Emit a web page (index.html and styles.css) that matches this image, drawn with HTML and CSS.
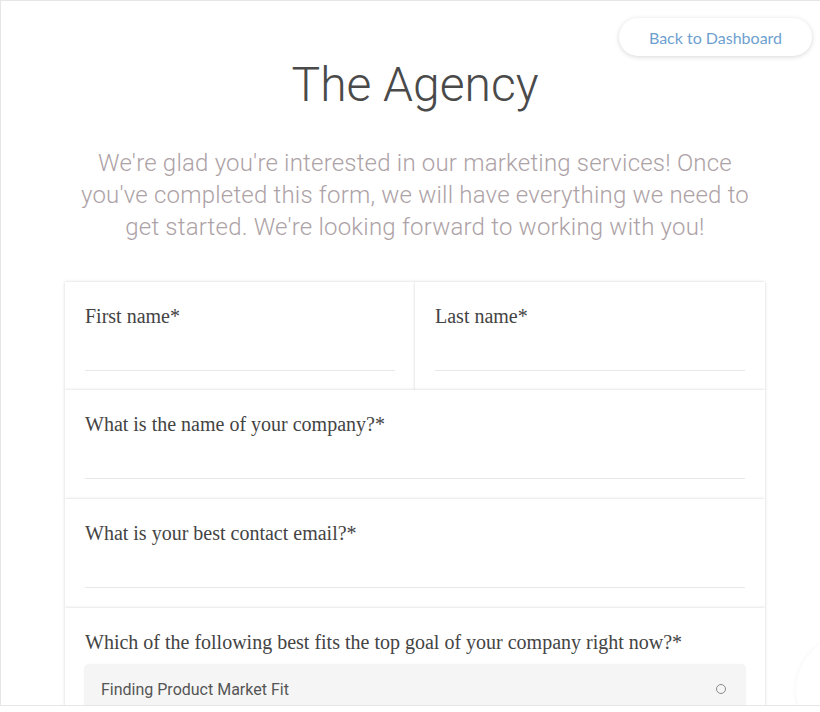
FILE: index.html
```html
<!DOCTYPE html>
<html lang="en">
<head>
<meta charset="utf-8">
<title>The Agency</title>
<link rel="stylesheet" href="styles.css">
</head>
<body>
<div class="frame">
  <div class="topbar">
    <a class="back-btn" href="#">Back to Dashboard</a>
  </div>
  <div class="content">
    <h1 class="title">The Agency</h1>
    <p class="intro">We're glad you're interested in our marketing services! Once you've completed this form, we will have everything we need to get started. We're looking forward to working with you!</p>
    <form class="card">
      <div class="row two">
        <div class="cell">
          <label class="label">First name*</label>
          <div class="input"></div>
        </div>
        <div class="cell">
          <label class="label">Last name*</label>
          <div class="input"></div>
        </div>
      </div>
      <div class="cell">
        <label class="label">What is the name of your company?*</label>
        <div class="input"></div>
      </div>
      <div class="cell">
        <label class="label">What is your best contact email?*</label>
        <div class="input"></div>
      </div>
      <div class="cell last">
        <label class="label">Which of the following best fits the top goal of your company right now?*</label>
        <div class="option">
          <span class="option-text">Finding Product Market Fit</span>
          <span class="radio"></span>
        </div>
      </div>
    </form>
  </div>
  <div class="fab"></div>
</div>
</body>
</html>
```

FILE: styles.css
```css
html, body {
  margin: 0;
  padding: 0;
  background: #ffffff;
}

.frame {
  position: relative;
  height: 704px;
  border-top: 1px solid #e6e6e6;
  border-left: 1px solid #e6e6e6;
  border-bottom: 1px solid #e6e6e6;
  overflow: hidden;
  background: #ffffff;
}

.topbar {
  display: flex;
  justify-content: flex-end;
  padding: 17px 8px 0 0;
}

.back-btn {
  display: flex;
  align-items: center;
  justify-content: center;
  width: 193px;
  height: 38px;
  border-radius: 19px;
  background: #ffffff;
  box-shadow: 0 1px 5px rgba(0, 0, 0, 0.16);
  color: #6e9fcf;
  font-family: Lato, "Liberation Sans", sans-serif;
  font-size: 16px;
  text-decoration: none;
}

.content {
  width: 700px;
  margin-left: 64px;
}

.title {
  margin: 0;
  text-align: center;
  font-family: Roboto, "Liberation Sans", sans-serif;
  font-weight: 300;
  font-size: 48px;
  line-height: 58px;
  color: #4a4a4a;
}

.intro {
  width: 690px;
  margin: 33px auto 0;
  text-align: center;
  font-family: Roboto, "Liberation Sans", sans-serif;
  font-weight: 300;
  font-size: 24px;
  letter-spacing: 0.2px;
  line-height: 32px;
  color: #ada2a6;
}

.card {
  margin: 39px 0 0;
  display: flex;
  flex-direction: column;
}

.row.two {
  display: grid;
  grid-template-columns: 350px 350px;
}

.cell {
  height: 109px;
  box-sizing: border-box;
  padding: 22px 20px 0;
  background: #ffffff;
  box-shadow: 0 0 3px rgba(0, 0, 0, 0.18);
  display: flex;
  flex-direction: column;
}

.row.two .cell {
  height: 108px;
}

.label {
  font-family: "Liberation Serif", serif;
  font-size: 20px;
  line-height: 24px;
  color: #444444;
}

.input {
  height: 42px;
  border-bottom: 1px solid #e8e8e8;
}

.cell.last {
  height: 120px;
}

.option {
  margin-top: 11px;
  height: 48px;
  display: flex;
  align-items: center;
  justify-content: space-between;
  padding: 0 19px 0 16px;
  background: #f5f5f5;
  border-radius: 4px;
  box-shadow: 0 0 2px rgba(0, 0, 0, 0.15);
}

.option-text {
  font-family: Roboto, "Liberation Sans", sans-serif;
  font-size: 16px;
  color: #555555;
}

.radio {
  width: 8px;
  height: 8px;
  border: 1px solid #8a8a8a;
  border-radius: 50%;
}

.fab {
  position: absolute;
  right: -86px;
  bottom: -40px;
  width: 110px;
  height: 110px;
  border-radius: 50%;
  background: #ffffff;
  box-shadow: 0 0 5px rgba(0, 0, 0, 0.05);
}
```
